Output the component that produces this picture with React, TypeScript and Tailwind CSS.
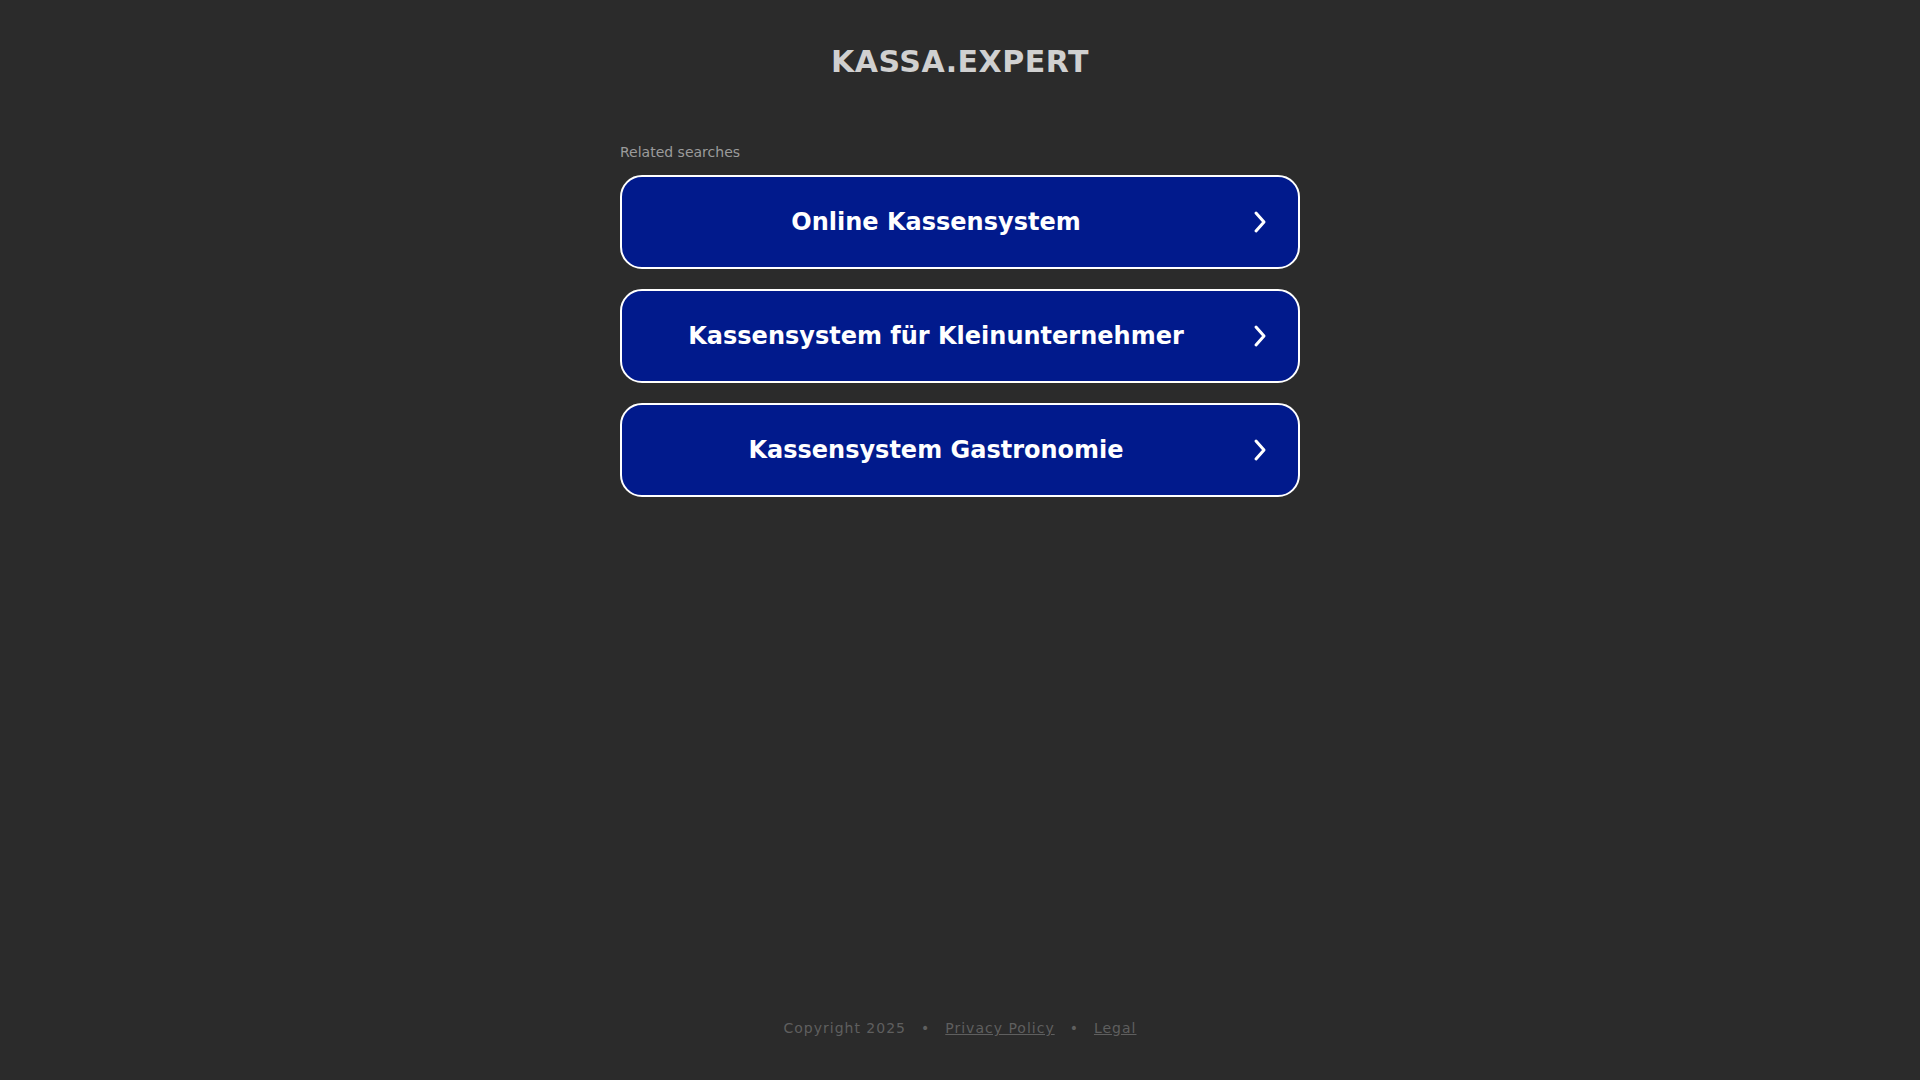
const searches = [
  "Online Kassensystem",
  "Kassensystem für Kleinunternehmer",
  "Kassensystem Gastronomie",
];

function Chevron() {
  return (
    <svg width="16" height="24" viewBox="0 0 16 24" fill="none" className="shrink-0">
      <path d="M4 3 L12 12 L4 21" stroke="white" strokeWidth="3" strokeLinecap="round" strokeLinejoin="round" />
    </svg>
  );
}

export default function App() {
  return (
    <div className="min-h-screen bg-[#2b2b2b] flex flex-col items-center font-['DejaVu_Sans',sans-serif]">
      <h1 className="mt-[45px] text-[30px] leading-[34px] font-bold text-[#d0d0d0] tracking-[0.5px]">
        KASSA.EXPERT
      </h1>

      <div className="mt-[65px] w-[680px]">
        <p className="text-[14px] leading-[16px] text-[#9b9b9b]">Related searches</p>
        <div className="mt-[15px] flex flex-col gap-[20px]">
          {searches.map((s) => (
            <a
              key={s}
              href="#"
              className="h-[94px] flex items-center bg-[#011a8c] border-2 border-white rounded-[22px] pr-[30px]"
            >
              <span className="flex-1 text-center text-[24px] font-bold text-white pr-[2px]">{s}</span>
              <Chevron />
            </a>
          ))}
        </div>
      </div>

      <footer className="mt-auto mb-[41px] text-[14px] text-[#5f5f5f] tracking-[1px] flex gap-[15px]">
        <span>Copyright 2025</span>
        <span>•</span>
        <a href="#" className="underline">Privacy Policy</a>
        <span>•</span>
        <a href="#" className="underline">Legal</a>
      </footer>
    </div>
  );
}
